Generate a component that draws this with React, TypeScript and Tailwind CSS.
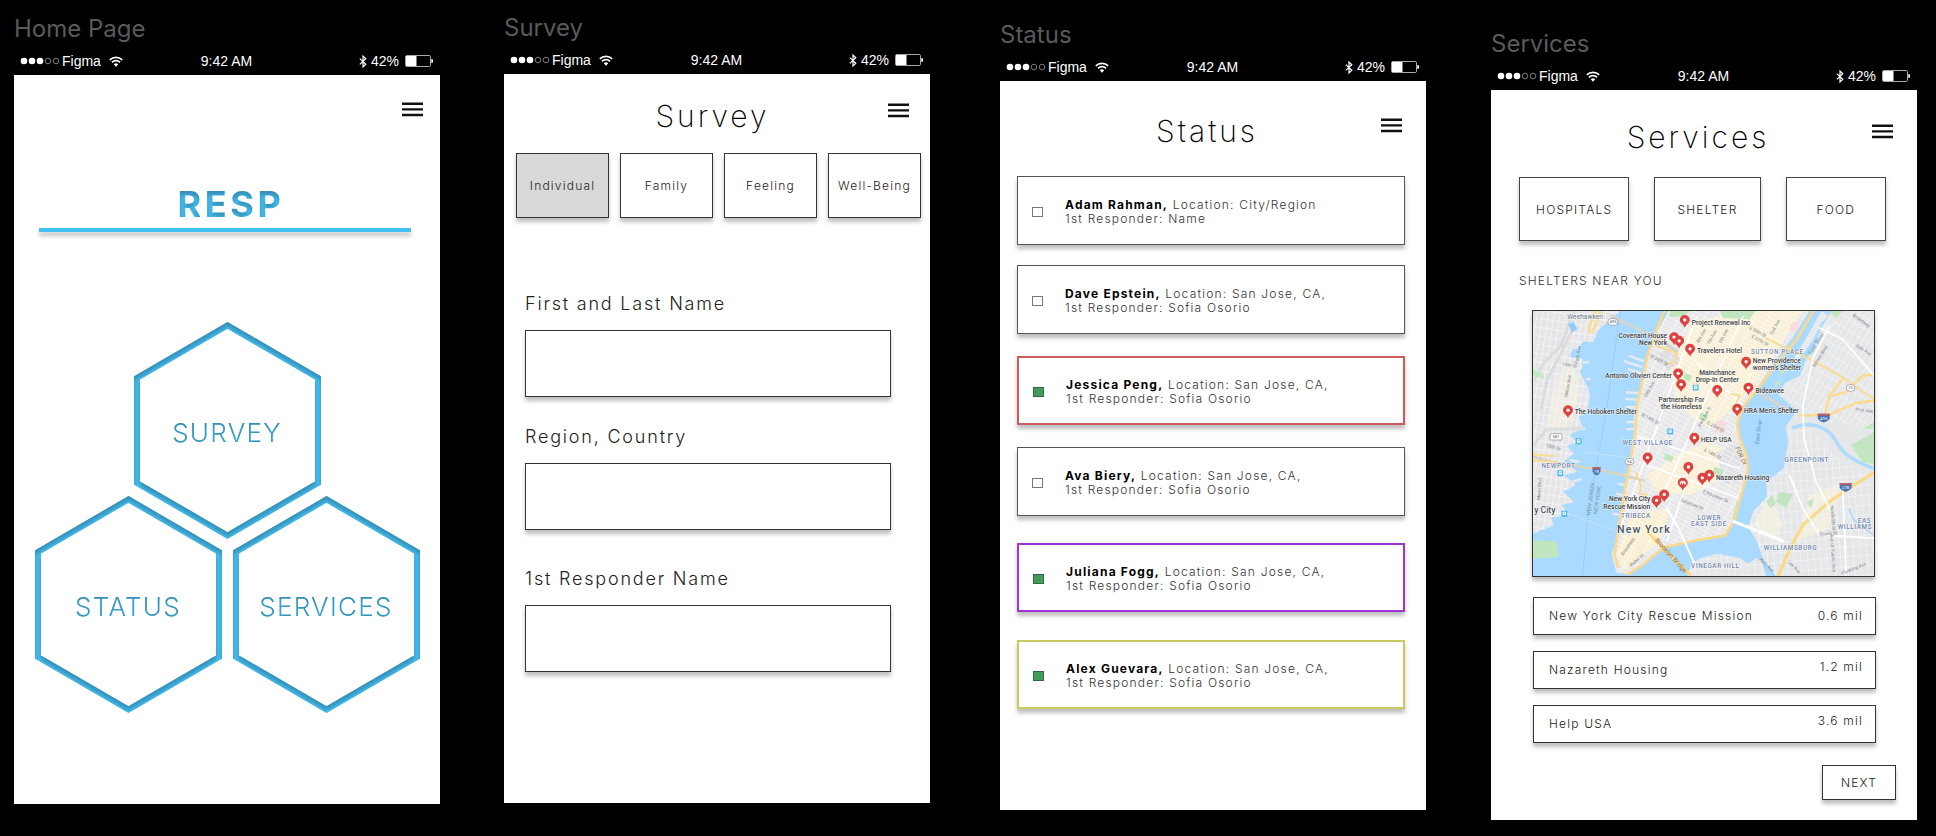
import React from "react";

const boxShadow = "shadow-[0_4px_4px_rgba(0,0,0,0.25)]";

function Wifi() {
  return (
    <svg viewBox="0 0 14 11" className="h-[11px] w-3.5" aria-hidden="true">
      <g fill="none" stroke="#fff" strokeWidth="1.7">
        <path d="M0.8 3.9a8.8 8.8 0 0 1 12.4 0" />
        <path d="M3 6.3a5.7 5.7 0 0 1 8 0" />
      </g>
      <path d="M7 10.8 4.8 8.3a3.2 3.2 0 0 1 4.4 0z" fill="#fff" />
    </svg>
  );
}

function Bluetooth() {
  return (
    <svg viewBox="0 0 8 13" className="h-[13px] w-2" aria-hidden="true">
      <path d="M0.8 3.6 6.8 9.2 4 11.9V1.1l2.8 2.7L0.8 9.4" fill="none" stroke="#fff" strokeWidth="1.2" />
    </svg>
  );
}

function Battery() {
  return (
    <svg viewBox="0 0 28 12" className="h-3 w-7" aria-hidden="true">
      <rect x="0.5" y="0.5" width="25" height="11" rx="1.2" fill="none" stroke="#aaa" />
      <rect x="1" y="1" width="10.5" height="10" fill="#fff" />
      <path d="M26.3 4a2 2 0 0 1 0 4z" fill="#fff" />
    </svg>
  );
}

function StatusBar() {
  return (
    <div className="mt-1 grid h-7 grid-cols-[1fr_auto_1fr] items-center pl-1.5 pr-[7px] text-sm leading-4 text-white [font-family:'Liberation_Sans',Arial,sans-serif]">
      <div className="flex items-center">
        <svg viewBox="0 0 40 8" className="h-2 w-10" aria-hidden="true">
          <circle cx="4" cy="4" r="3.3" fill="#fff" />
          <circle cx="12" cy="4" r="3.3" fill="#fff" />
          <circle cx="20" cy="4" r="3.3" fill="#fff" />
          <circle cx="28" cy="4" r="2.8" fill="none" stroke="#999" strokeWidth="0.8" />
          <circle cx="36" cy="4" r="2.8" fill="none" stroke="#999" strokeWidth="0.8" />
        </svg>
        <span className="ml-0.5 mr-2">Figma</span>
        <Wifi />
      </div>
      <span>9:42 AM</span>
      <div className="flex items-center justify-end">
        <Bluetooth />
        <span className="ml-1 mr-1.5">42%</span>
        <Battery />
      </div>
    </div>
  );
}

function Frame({ name, className, children }: { name: string; className: string; children: React.ReactNode }) {
  return (
    <section className={`min-w-0 flex-1 ${className}`}>
      <h2 className="text-2xl leading-7 text-[#5a5a5a]">{name}</h2>
      <StatusBar />
      <div className="flex min-h-[729px] flex-col bg-white">{children}</div>
    </section>
  );
}

function Header({ title, className }: { title?: string; className: string }) {
  return (
    <header className={`grid grid-cols-[1fr_auto_1fr] items-start pl-3 ${className}`}>
      <h1 className="col-start-2 h-9 text-3xl font-extralight leading-9 tracking-widest text-black">{title}</h1>
      <button type="button" aria-label="Menu" className="col-start-3 mt-[5px] justify-self-end">
        <svg viewBox="0 0 21 15" className="h-[15px] w-[21px]" aria-hidden="true">
          <path d="M0 1.8h21M0 7.4h21M0 13h21" stroke="#111" strokeWidth="2.4" />
        </svg>
      </button>
    </header>
  );
}

function InnerShadow() {
  return (
    <svg width="0" height="0" className="absolute" aria-hidden="true">
      <filter id="inner-shadow" colorInterpolationFilters="sRGB">
        <feOffset in="SourceAlpha" dy="4" />
        <feGaussianBlur stdDeviation="2" />
        <feComposite in2="SourceAlpha" operator="arithmetic" k2="-1" k3="1" />
        <feColorMatrix values="0 0 0 0 0  0 0 0 0 0  0 0 0 0 0  0 0 0 0.25 0" />
        <feBlend in2="SourceGraphic" mode="normal" />
      </filter>
    </svg>
  );
}

function Hexagon({ label }: { label: string }) {
  return (
    <a href="#" className="relative grid h-[217px] w-[187px] place-items-center">
      <svg viewBox="0 0 187 217" className="absolute inset-0 h-full w-full [filter:url(#inner-shadow)]" aria-hidden="true">
        <polygon points="93.5,3.4 184,56 184,161 93.5,213.6 3,161 3,56" fill="none" stroke="#45bdf0" strokeWidth="6" />
      </svg>
      <span className="relative pt-1 text-[26px] font-light leading-8 tracking-wider text-[#45bdf0] [filter:url(#inner-shadow)]">
        {label}
      </span>
    </a>
  );
}

function HomePage() {
  return (
    <Frame name="Home Page" className="pt-[15px]">
      <Header className="pr-[17px] pt-[22px]" />
      <div className="ml-[25px] mr-[29px] mt-[49px] flex flex-col">
        <p className="self-center pl-3 text-4xl font-bold leading-[44px] tracking-widest text-[#45bdf0] [filter:url(#inner-shadow)]">
          RESP
        </p>
        <div className={`mt-0.5 h-1 bg-[#44bff1] ${boxShadow}`} />
      </div>
      <nav className="mt-[90px] flex flex-col items-center">
        <Hexagon label="SURVEY" />
        <div className="-mt-[43px] flex gap-[11px]">
          <Hexagon label="STATUS" />
          <Hexagon label="SERVICES" />
        </div>
      </nav>
    </Frame>
  );
}

const surveyTabs = ["Individual", "Family", "Feeling", "Well-Being"];

const fields = [
  { id: "full-name", label: "First and Last Name", space: "" },
  { id: "region", label: "Region, Country", space: "mt-7" },
  { id: "responder", label: "1st Responder Name", space: "mt-[37px]" },
];

function Survey() {
  return (
    <Frame name="Survey" className="ml-16 pt-3.5">
      <Header title="Survey" className="pr-[21px] pt-6" />
      <div className="mt-[19px] grid grid-cols-4 gap-[11px] pl-3 pr-[9px]">
        {surveyTabs.map((tab, i) => (
          <button
            key={tab}
            type="button"
            className={`h-[65px] border border-[#333] text-xs font-light tracking-widest text-[#222] ${boxShadow} ${i === 0 ? "bg-[#d9d9d9]" : "bg-white"}`}
          >
            {tab}
          </button>
        ))}
      </div>
      <form className="mt-[74px] flex flex-col pl-[21px] pr-[39px]">
        {fields.map((f) => (
          <div key={f.id} className={`flex flex-col gap-3.5 ${f.space}`}>
            <label htmlFor={f.id} className="text-lg font-light leading-6 tracking-widest text-[#222]">
              {f.label}
            </label>
            <input id={f.id} type="text" className={`h-[67px] w-full border border-[#333] bg-white px-3 ${boxShadow}`} />
          </div>
        ))}
      </form>
    </Frame>
  );
}

const people = [
  { name: "Adam Rahman", place: "City/Region", responder: "Name", safe: false, box: "border border-[#555]" },
  { name: "Dave Epstein", place: "San Jose, CA,", responder: "Sofia Osorio", safe: false, box: "mt-5 border border-[#555]" },
  { name: "Jessica Peng", place: "San Jose, CA,", responder: "Sofia Osorio", safe: true, box: "mt-[22px] border-2 border-[#cf5a5c]" },
  { name: "Ava Biery", place: "San Jose, CA,", responder: "Sofia Osorio", safe: false, box: "mt-[22px] border border-[#555]" },
  { name: "Juliana Fogg", place: "San Jose, CA,", responder: "Sofia Osorio", safe: true, box: "mt-[27px] border-2 border-[#a134d8]" },
  { name: "Alex Guevara", place: "San Jose, CA,", responder: "Sofia Osorio", safe: true, box: "mt-[28px] border-2 border-[#c9cb5c]" },
];

function Status() {
  return (
    <Frame name="Status" className="ml-[70px] pt-[21px]">
      <Header title="Status" className="pr-6 pt-8" />
      <ul className="mt-[27px] flex flex-col pl-[17px] pr-[21px]">
        {people.map((p) => (
          <li key={p.name} className={`flex min-h-[69px] bg-white ${boxShadow} ${p.box}`}>
            <label className="flex flex-1 items-center gap-[22px] pl-3.5 pt-0.5 text-xs leading-3.5 tracking-widest">
              <input
                type="checkbox"
                defaultChecked={p.safe}
                className="h-2.5 w-[11px] shrink-0 appearance-none border border-[#777] checked:border-[#2f6b42] checked:bg-[#439a5c]"
              />
              <span className="font-light text-[#333]">
                <strong className="font-bold text-black">{p.name},</strong> Location: {p.place}
                <br />
                1st Responder: {p.responder}
              </span>
            </label>
          </li>
        ))}
      </ul>
    </Frame>
  );
}

const pins = [
  [524, 96], [492, 148], [507, 159], [540, 183], [504, 257], [513, 290], [622, 307], [709, 222], [716, 300],
  [682, 364], [172, 368], [553, 451], [412, 511], [535, 539], [518, 587], [577, 572], [598, 563], [462, 622], [439, 640],
];

const placeNames: [string, number, number, "start" | "middle" | "end"][] = [
  ["Project Renewal Inc", 545, 86, "start"],
  ["Covenant House", 471, 127, "end"],
  ["New York", 471, 149, "end"],
  ["Travelers Hotel", 561, 173, "start"],
  ["New Providence", 729, 201, "start"],
  ["women's Shelter", 729, 223, "start"],
  ["Antonio Olivieri Center", 485, 246, "end"],
  ["Mainchance", 622, 238, "middle"],
  ["Drop-In Center", 622, 260, "middle"],
  ["Bideawee", 737, 291, "start"],
  ["Partnership For", 514, 319, "middle"],
  ["the Homeless", 514, 341, "middle"],
  ["HRA Men's Shelter", 703, 354, "start"],
  ["The Hoboken Shelter", 192, 357, "start"],
  ["HELP USA", 573, 439, "start"],
  ["Nazareth Housing", 618, 555, "start"],
  ["New York City", 420, 619, "end"],
  ["Rescue Mission", 420, 641, "end"],
];

const districts: [string, number, number][] = [
  ["SUTTON PLACE", 803, 176],
  ["WEST VILLAGE", 412, 449],
  ["NEWPORT", 143, 517],
  ["GREENPOINT", 892, 499],
  ["TRIBECA", 377, 669],
  ["LOWER", 598, 674],
  ["EAST SIDE", 597, 692],
  ["WILLIAMSBURG", 843, 767],
  ["VINEGAR HILL", 616, 819],
  ["EAS", 1066, 684],
  ["WILLIAMS", 1037, 702],
];

const streets: [string, number, number, number][] = [
  ["14th St", 176, 213, 8], ["Park Ave", 206, 178, -80], ["Willow Ave", 176, 272, -80], ["Marin Blvd", 90, 582, -86],
  ["18th Dr", 127, 460, 15], ["8th Ave", 578, 122, -62], ["7th Ave", 610, 126, -62], ["6th Ave", 645, 122, -62],
  ["E 59th St", 742, 112, 28], ["E 57th St", 749, 138, 28], ["2nd Ave", 800, 96, -62], ["W 34th St", 444, 197, 28],
  ["10th Ave", 421, 284, -62], ["W 14th St", 417, 374, 28], ["Park Ave S", 587, 366, -62], ["E 23rd St", 615, 398, 28],
  ["E 14th St", 606, 480, 28], ["E Houston St", 615, 608, 22], ["Delancey St", 544, 632, 22], ["Broadway", 356, 758, -56],
  ["Water St", 382, 800, -40], ["Vernon Blvd", 935, 185, -58], ["36th Ave", 1060, 166, 32], ["41st Ave", 1064, 349, 8],
  ["Broadway", 1054, 78, 36], ["Grand St", 957, 721, -5], ["Humboldt St", 966, 668, 86], ["Ave of Puerto Rico", 966, 776, 86],
  ["Flushing Ave", 1035, 826, -22], ["Lee Ave", 850, 820, 45], ["Kent Ave", 768, 814, 45],
];

const transit = [[557, 276], [480, 408], [204, 438], [149, 534], [161, 656]];

const jersey =
  "M66 45H330L296 74 262 104 248 140 218 136 204 158 184 160 178 184 214 190 216 214 206 226 232 276 238 300 230 350 204 364 216 396 176 420 200 440 168 452 190 474 160 498 200 530 160 540 196 570 158 590 190 622 152 630 176 660 120 668 130 690 66 716Z";
const manhattan =
  "M475 45 440 110 412 184 400 240 384 300 372 350 370 420 358 500 346 562 330 650 316 740 304 780 318 834 350 838 400 808 450 762 520 742 600 730 645 722 668 690 690 610 712 530 708 480 688 430 682 384 702 332 740 282 790 206 850 124 900 45Z";
const queens =
  "M966 45 938 92 914 150 890 190 872 240 826 262 806 296 862 346 828 394 836 440 822 520 770 560 772 604 730 650 716 694 742 742 764 800 800 844H1095V45Z";

function ShelterMap() {
  return (
    <svg
      viewBox="66 45 1029 799"
      preserveAspectRatio="xMidYMid slice"
      className="block h-[265px] w-full [font-family:Roboto,sans-serif]"
      role="img"
      aria-label="Map of shelters near you"
    >
      <defs>
        <pattern id="grid-m" width="34" height="13" patternUnits="userSpaceOnUse" patternTransform="rotate(28)">
          <path d="M0 0H34M0 0V13" stroke="#fff" strokeWidth="3" />
        </pattern>
        <pattern id="grid-j" width="17" height="26" patternUnits="userSpaceOnUse" patternTransform="rotate(9)">
          <path d="M0 0H17M0 0V26" stroke="#fff" strokeWidth="3" />
        </pattern>
        <pattern id="grid-q" width="30" height="17" patternUnits="userSpaceOnUse" patternTransform="rotate(-58)">
          <path d="M0 0H30M0 0V17" stroke="#fafafa" strokeWidth="3" />
        </pattern>
        <pattern id="grid-b" width="20" height="30" patternUnits="userSpaceOnUse" patternTransform="rotate(-5)">
          <path d="M0 0H20M0 0V30" stroke="#fafafa" strokeWidth="3" />
        </pattern>
        <clipPath id="clip-m"><path d={manhattan} /></clipPath>
        <clipPath id="clip-q"><path d={queens} /></clipPath>
      </defs>

      <rect x="66" y="45" width="1029" height="799" fill="#aadaff" />

      <g stroke="#e8eaed" strokeWidth="7">
        <path d="M400 196 356 180M396 214 340 196M392 232 352 220M384 292 346 290M380 312 344 310M374 336 346 334M372 380 348 380M370 400 346 402M356 540 328 538M350 570 322 566M340 600 316 596M330 660 306 656" />
        <path d="M216 200H236M226 250H240M200 396 224 402M176 494 206 500M184 560 214 552" />
      </g>

      <path d={jersey} fill="#e6e6e8" />
      <path d={jersey} fill="url(#grid-j)" />
      <path d="M70 255 100 200 150 150 190 45M66 450 110 400 215 400M190 90 150 175 110 250 90 340" fill="none" stroke="#dadce0" strokeWidth="9" />
      <path d="M104 400 112 360 140 250 178 190 200 240 208 300 170 396Z" fill="#fbf5dc" opacity="0.4" />
      <path d="M66 218 96 234 100 250 66 240Z" fill="#c5e8c5" />
      <path d="M66 736 138 740 144 786 66 792Z" fill="#bfe6bd" />
      <path d="M172 84 190 78 200 100 184 110Z" fill="#8fcdf8" />

      <path d={manhattan} fill="#e8e8ea" />
      <g clipPath="url(#clip-m)">
        <g opacity="0.8">
          <path d="M545 80 690 45 880 45 800 170 720 290 600 400 500 330 480 210Z" fill="#fdf2d2" />
          <path d="M500 480 590 440 660 470 620 560 540 600 440 590 410 540Z" fill="#fdf2d2" />
          <path d="M360 660 480 640 450 740 340 830 320 780Z" fill="#fdf0ca" />
        </g>
        <path d="M440 170 500 160 510 200 470 225Z" fill="#dcdde0" />
        <path d="M620 470 690 440 690 560 640 570Z" fill="#e0e1e4" />
        <rect x="66" y="45" width="1029" height="799" fill="url(#grid-m)" />
        <path d="M480 45 540 45 520 62 478 62ZM630 45 736 45 720 70 640 66ZM524 232 546 240 538 258 520 250ZM572 350 596 360 586 378 566 368ZM468 474 492 486 482 500 460 490ZM612 514 640 526 634 546 608 534ZM680 620 694 624 672 700 660 706Z" fill="#bfe6bd" />
        <path d="M620 375 650 380 640 415 612 408ZM845 80 870 78 858 110 842 104Z" fill="#f9dcdc" />
        <path d="M560 60 330 700M700 60 440 640M410 510 690 610M372 420 690 520M560 200 700 330M530 560 470 740" fill="none" stroke="#fff" strokeWidth="5" />
      </g>

      <path d={queens} fill="#e6e7e9" />
      <g clipPath="url(#clip-q)">
        <path d="M880 200 966 45H1095V400L960 380 800 300Z" fill="url(#grid-q)" />
        <path d="M700 400 900 400 1000 500 1095 540V844H700Z" fill="url(#grid-b)" />
        <path d="M900 600 1000 560 960 700 860 740ZM780 600 820 690 790 740 730 690Z" fill="#fbf5dc" opacity="0.5" />
        <path d="M1024 450 1095 410V508L1060 500ZM1060 400 1095 380V400ZM808 590 850 596 830 640 800 620ZM770 620 786 600 800 624 782 640ZM890 620 914 610 904 640ZM884 176 930 120 912 160 892 190ZM958 45 1000 45 980 66Z" fill="#c2e7c0" />
      </g>
      <path d="M848 398C900 376 950 392 976 430 1000 480 1040 500 1095 520" fill="none" stroke="#aadaff" strokeWidth="10" />
      <path d="M1020 640C1030 690 1060 690 1092 720" fill="none" stroke="#aadaff" strokeWidth="5" />
      <path d="M958 60 936 80 912 130 870 190 844 214 858 180 900 110 936 45Z" fill="#e9eaec" />
      <path d="M812 212 830 220 812 246ZM792 262 820 250 800 276Z" fill="#c2e7c0" />

      <path d="M532 844 544 806 570 792 620 776 690 790 716 806 740 790 756 802 770 844Z" fill="#e6e7e9" />
      <path d="M532 844 544 806 570 792 620 776 690 790 716 806 740 790 756 802 770 844Z" fill="url(#grid-b)" />

      <g fill="none" strokeLinejoin="round" strokeLinecap="round">
        <path d="M304 60 440 128 500 166M740 286 826 338" stroke="#d8d4cb" strokeWidth="9" />
        <path d="M66 484 126 500 240 520 330 538 400 556" stroke="#d9d3c3" strokeWidth="8" />
        <path d="M66 478 130 482M66 496 126 500" stroke="#fbdc92" strokeWidth="6" />
        <path d="M256 45C250 76 226 90 236 108 252 112 262 72 270 45" stroke="#fbdc92" strokeWidth="7" />
        <path d="M462 45 440 100 410 184 398 250 380 330 374 420 360 500 344 580 328 680 312 780 322 816" stroke="#fbd98b" strokeWidth="8" />
        <path d="M440 150 500 172 494 200 470 206" stroke="#fbd98b" strokeWidth="6" />
        <path d="M912 45 862 130 800 206 740 284 700 334 682 384 690 432 710 480 714 530 692 606 672 680 646 722 560 736 460 758 400 808 352 838" stroke="#fbd98b" strokeWidth="8" />
        <path d="M376 530 392 570 388 596 410 600M664 296 690 300 680 320" stroke="#fbd98b" strokeWidth="5" />
        <path d="M414 712 470 772 540 840" stroke="#fbd98b" strokeWidth="9" />
        <path d="M470 640 500 690 556 812" stroke="#fff" strokeWidth="6" />
        <path d="M672 680 820 738" stroke="#fff" strokeWidth="9" />
        <path d="M770 128 900 190 1000 244 1062 290 1095 310" stroke="#fbdc92" strokeWidth="6" />
        <path d="M870 360 960 358 1040 322 1095 316M1095 236 1060 240 1010 290 970 300M946 358 960 300 1000 250" stroke="#fbdc92" strokeWidth="8" />
        <path d="M1095 532 1040 566 960 620 880 690 842 760 806 844" stroke="#fbd98b" strokeWidth="10" />
        <path d="M930 96 1000 130 1095 240M960 90 910 190 880 330 884 430 920 560 960 640M840 540 880 640 930 720 1095 730M1000 560 1010 844" stroke="#fff" strokeWidth="5" />
        <path d="M330 45 290 330 232 660 216 844" stroke="#8fbfe2" strokeWidth="2" strokeDasharray="7 5" />
        <path d="M176 656 260 690 360 720M220 470 372 490" stroke="#c6e5fb" strokeWidth="3" />
      </g>

      <g fontSize="14" fill="#83868b" textAnchor="middle">
        {streets.map(([t, x, y, r]) => (
          <text key={t + x} x={x} y={y} transform={`rotate(${r} ${x} ${y})`}>{t}</text>
        ))}
      </g>
      <g fontSize="17" fill="#5b93c7" textAnchor="middle">
        <text x="924" y="146" transform="rotate(-58 924 146)">East River</text>
        <text x="752" y="410" transform="rotate(-82 752 410)">East River</text>
      </g>
      <g fontSize="17" fill="#8096a8" textAnchor="middle">
        <text x="246" y="612" transform="rotate(-82 246 612)">NEW JERSEY</text>
        <text x="266" y="616" transform="rotate(-82 266 616)">NEW YORK</text>
      </g>
      <g fontSize="19" fill="#96703a" textAnchor="middle">
        <text x="688" y="484" transform="rotate(66 688 484)">FDR Dr</text>
        <text x="478" y="786" transform="rotate(48 478 786)">Brooklyn Bridge</text>
      </g>

      <g fill="#fff" stroke="#85898e" strokeWidth="2" fontSize="12">
        <rect x="292" y="68" width="30" height="20" rx="10" />
        <rect x="118" y="415" width="36" height="19" rx="3" />
        <rect x="344" y="490" width="26" height="18" rx="9" />
        <rect x="1011" y="267" width="26" height="20" rx="10" />
      </g>
      <g fill="#555" fontSize="12" textAnchor="middle">
        <text x="307" y="82">495</text>
        <text x="136" y="429">681</text>
        <text x="357" y="503">9A</text>
        <text x="1024" y="281">25</text>
      </g>
      {[["78", 258, 527, 12], ["495", 943, 367, 18], ["278", 1009, 576, 18]].map(([t, x, y, w]) => (
        <g key={t as string} transform={`translate(${x} ${y})`}>
          <path d={w === 12 ? "M-12-11H12V2Q10 10 0 14-10 10-12 2Z" : "M-18-12H18V2Q14 10 0 14-14 10-18 2Z"} fill="#4a74b4" />
          <path d={w === 12 ? "M-12-11H12V-6H-12Z" : "M-18-12H18V-7H-18Z"} fill="#cc5a5a" />
          <text y="7" fontSize="13" fill="#fff" textAnchor="middle">{t}</text>
        </g>
      ))}
      {transit.map(([x, y]) => (
        <g key={x} transform={`translate(${x} ${y})`}>
          <rect x="-9" y="-9" width="18" height="18" rx="2" fill="#4fb9ea" />
          <rect x="-5" y="-6" width="10" height="10" rx="2" fill="#fff" />
          <path d="M-3-3H3V0H-3Z" fill="#4fb9ea" />
        </g>
      ))}

      <g
        className="tracking-widest"
        fontSize="19"
        fontWeight="500"
        fill="#7389ae"
        stroke="#fff"
        strokeWidth="3"
        paintOrder="stroke"
        strokeOpacity="0.7"
        textAnchor="middle"
      >
        {districts.map(([t, x, y]) => (
          <text key={t} x={x} y={y}>{t}</text>
        ))}
      </g>
      <g fill="#4b5566" stroke="#fff" strokeWidth="4" strokeOpacity="0.7" paintOrder="stroke" fontWeight="500">
        <text x="320" y="714" fontSize="32" className="tracking-widest">New York</text>
        <text x="70" y="654" fontSize="26">y City</text>
        <text x="170" y="70" fontSize="20" fontWeight="400" fill="#6c7686">Weehawken</text>
      </g>
      <g fontSize="20" fontWeight="500" fill="#3c3c3c" stroke="#fff" strokeWidth="3" strokeOpacity="0.8" paintOrder="stroke">
        {placeNames.map(([t, x, y, a]) => (
          <text key={t + y} x={x} y={y} textAnchor={a}>{t}</text>
        ))}
      </g>
      {pins.map(([x, y]) => (
        <g key={x} transform={`translate(${x} ${y})`}>
          <path d="M0 0C-2-10-15-14-15-24A15 15 0 0 1 15-24C15-14 2-10 0 0Z" fill="#db4340" />
          {x === 518 ? (
            <path d="M-9-19V-25L-3-31 0-28 3-31 9-25V-19H4V-24H1V-19H-2V-24H-5V-19Z" fill="#fff" />
          ) : (
            <circle cy="-24" r="5" fill="#fff" />
          )}
        </g>
      ))}
    </svg>
  );
}

const shelters = [
  { name: "New York City Rescue Mission", distance: "0.6 mil", lift: "" },
  { name: "Nazareth Housing", distance: "1.2 mil", lift: "pb-1.5" },
  { name: "Help USA", distance: "3.6 mil", lift: "pb-1.5" },
];

function Services() {
  return (
    <Frame name="Services" className="ml-[65px] pt-[30px]">
      <Header title="Services" className="pr-6 pt-[29px]" />
      <div className="mt-[22px] grid grid-cols-[110fr_106fr_100fr] gap-[25px] pl-7 pr-[31px]">
        {["HOSPITALS", "SHELTER", "FOOD"].map((kind) => (
          <button
            key={kind}
            type="button"
            className={`h-16 border border-[#444] bg-white pt-0.5 text-xs font-light tracking-widest text-[#222] ${boxShadow}`}
          >
            {kind}
          </button>
        ))}
      </div>
      <h2 className="ml-7 mt-[30px] text-xs font-light leading-5 tracking-widest text-[#333]">SHELTERS NEAR YOU</h2>
      <div className={`ml-[41px] mr-[42px] mt-[19px] border border-[#333] ${boxShadow}`}>
        <ShelterMap />
      </div>
      <ul className="mt-5 flex flex-col gap-4 pl-[42px] pr-[41px]">
        {shelters.map((s) => (
          <li
            key={s.name}
            className={`flex h-[38px] items-center justify-between border border-[#333] bg-white pl-[15px] pr-3 text-xs font-light tracking-widest text-[#222] ${boxShadow}`}
          >
            <span>{s.name}</span>
            <span className={s.lift}>{s.distance}</span>
          </li>
        ))}
      </ul>
      <button
        type="button"
        className={`mb-5 mr-[21px] mt-[22px] h-[35px] w-[74px] self-end border border-[#333] bg-white text-xs font-light tracking-widest text-[#222] ${boxShadow}`}
      >
        NEXT
      </button>
    </Frame>
  );
}

export default function App() {
  return (
    <main className="flex min-h-screen items-start bg-black pl-3.5 pr-[19px] [font-family:Inter,sans-serif]">
      <InnerShadow />
      <HomePage />
      <Survey />
      <Status />
      <Services />
    </main>
  );
}
